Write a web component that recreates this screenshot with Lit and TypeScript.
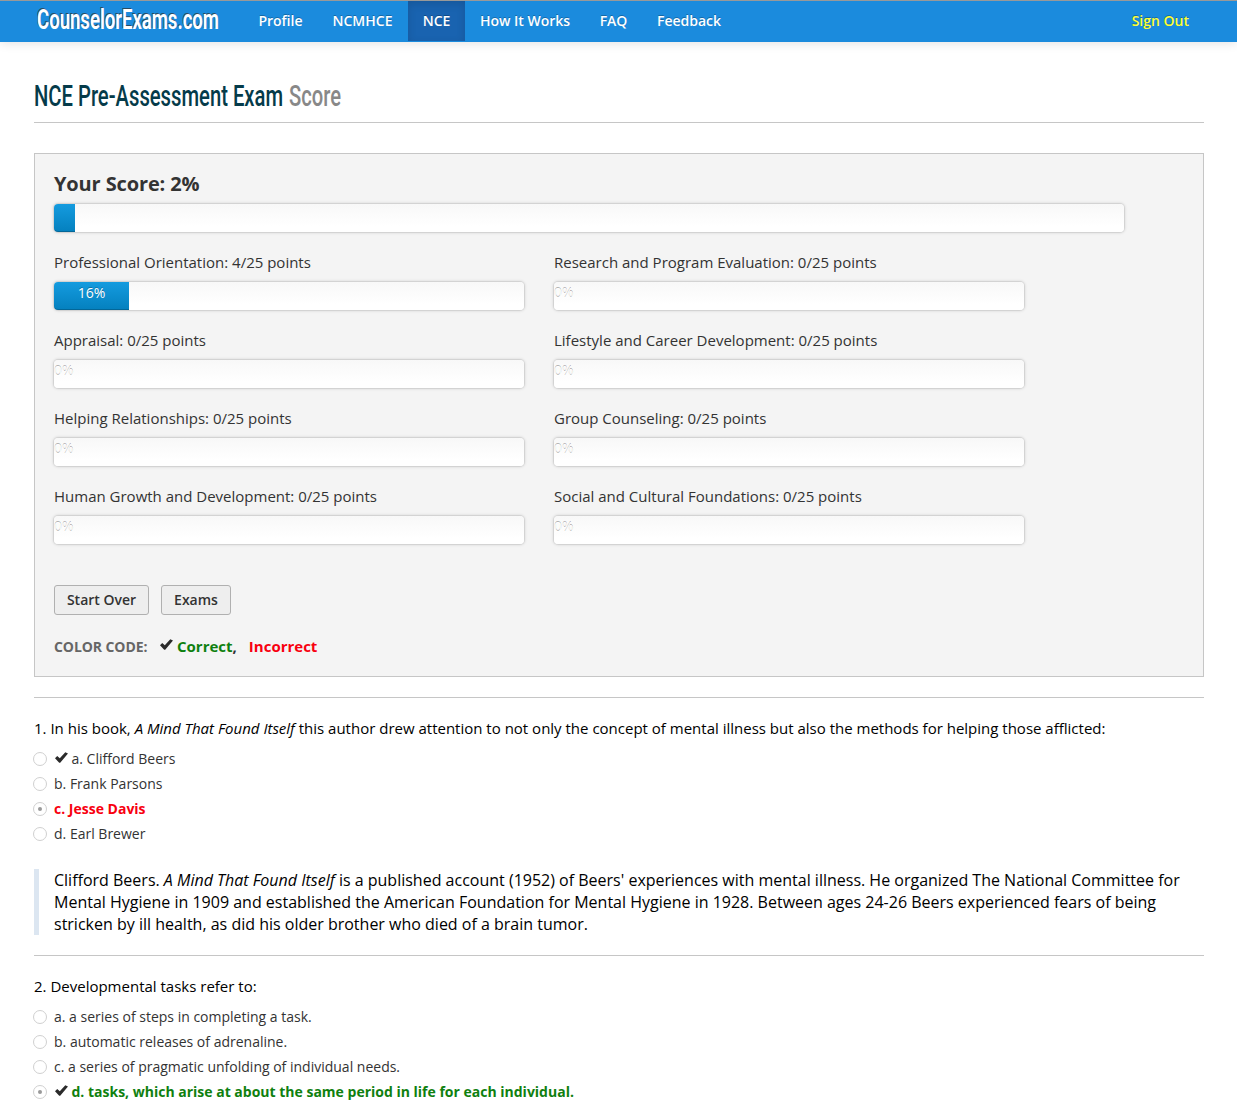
import { LitElement, html, css } from "lit";
import { customElement, property } from "lit/decorators.js";

const sans = css`"Open Sans", "Noto Sans", sans-serif`;

const check = () => html`<svg class="check" width="13" height="11" viewBox="0 0 13 11">
  <path d="M0 6.2 L2.2 4 L4.8 6.3 L10.3 0.3 L13 1.6 L5.2 10.8 L4.2 10.8 Z" fill="#2b2b2b" />
</svg>`;

// Condenses its text horizontally so that it fills the given width.
@customElement("fit-text")
class FitText extends LitElement {
  @property() text = "";
  @property({ type: Number }) width = 100;
  static styles = css`
    :host { display: block; flex: none; }
    .text { display: inline-block; white-space: nowrap; transform-origin: 0 50%; }
  `;
  updated() {
    const el = this.renderRoot.querySelector(".text") as HTMLElement;
    el.style.transform = "none";
    const scale = this.width / el.getBoundingClientRect().width;
    el.style.transform = `scaleX(${scale})`;
  }
  render() {
    return html`<div style="width:${this.width}px"><span class="text">${this.text}</span></div>`;
  }
}

@customElement("site-header")
class SiteHeader extends LitElement {
  static styles = css`
    :host { display: block; font-family: ${sans}; }
    .bar {
      height: 42px; box-sizing: border-box; border-top: 1px solid #999;
      background: #1b8bdd; box-shadow: 0 1px 10px rgba(0, 0, 0, 0.12);
      display: flex; padding: 0 48px 0 37px;
    }
    .logo {
      font: 600 27px/39px Roboto, sans-serif; color: #fff; text-shadow: -1px -1px 0 #2b4a60;
      width: 207px; box-sizing: border-box;
    }
    .nav { display: flex; flex: 1; }
    .item {
      height: 40px; line-height: 40px; font-size: 14px; font-weight: 600; color: #fff;
      text-align: center; text-shadow: 0 -1px 0 rgba(0, 0, 0, 0.25); white-space: nowrap;
    }
    .active { background: #1963b0; box-shadow: inset 0 3px 8px rgba(0, 0, 0, 0.125); }
    .out { color: #ffff33; }
  `;
  render() {
    const items: [string, number][] = [
      ["Profile", 73], ["NCMHCE", 91], ["NCE", 57], ["How It Works", 120], ["FAQ", 57], ["Feedback", 94],
    ];
    return html`<div class="bar">
      <div class="logo"><fit-text text="CounselorExams.com" width="182"></fit-text></div>
      <div class="nav">
        ${items.map(([t, w]) => html`<div class="item ${t === "NCE" ? "active" : ""}" style="width:${w}px">${t}</div>`)}
      </div>
      <div class="item out">Sign Out</div>
    </div>`;
  }
}

@customElement("score-bar")
class ScoreBar extends LitElement {
  @property({ type: Number }) value = 0;
  @property({ type: Boolean }) plain = false;
  static styles = css`
    :host { display: block; font-family: ${sans}; }
    .track {
      height: 28px; border-radius: 4px; background: linear-gradient(#f8f8f8, #fff 80%);
      box-shadow: 0 0 0 1px rgba(0, 0, 0, 0.05), 0 0 3px 1px rgba(0, 0, 0, 0.13);
    }
    .fill {
      height: 28px; box-sizing: border-box; border-radius: 4px 0 0 4px; line-height: 22px;
      background: linear-gradient(#149bdf, #0480be); box-shadow: inset 0 -1px 0 rgba(0, 0, 0, 0.2);
      color: #fff; font-size: 14px; text-align: center; text-shadow: 0 -1px 0 rgba(0, 0, 0, 0.25);
    }
    .zero { color: #fff; font-size: 14px; line-height: 22px; text-shadow: 0 -1px 0 rgba(0, 0, 0, 0.3); }
  `;
  render() {
    return html`<div class="track">${this.value > 0
      ? html`<div class="fill" style="width:${this.value}%">${this.plain ? "" : `${this.value}%`}</div>`
      : html`<div class="zero">0%</div>`}</div>`;
  }
}

@customElement("answer-row")
class AnswerRow extends LitElement {
  @property() text = "";
  @property() tone = "";
  @property({ type: Boolean }) picked = false;
  @property({ type: Boolean }) correct = false;
  static styles = css`
    :host { display: block; font-family: ${sans}; }
    .row { display: flex; align-items: center; height: 25px; font-size: 14px; color: #333; margin-left: -1px; white-space: nowrap; }
    .radio {
      width: 14px; height: 14px; box-sizing: border-box; border: 1px solid #d0d0d0; border-radius: 50%;
      margin-right: 7px; display: flex; align-items: center; justify-content: center; flex: none;
    }
    .dot { width: 4px; height: 4px; border-radius: 50%; background: #999; }
    .check { margin: 0 3.5px 3px 1px; }
    .red { color: #f8000f; font-weight: 700; }
    .green { color: #0f800f; font-weight: 700; }
  `;
  render() {
    return html`<div class="row">
      <span class="radio">${this.picked ? html`<span class="dot"></span>` : ""}</span>
      ${this.correct ? check() : ""}<span class="${this.tone}">${this.text}</span>
    </div>`;
  }
}

@customElement("app-root")
class AppRoot extends LitElement {
  static styles = css`
    :host { display: block; height: 1115px; overflow: hidden; background: #fff; font-family: ${sans}; color: #333; }
    .page { padding: 0 33px 0 34px; }
    .title {
      height: 80px; box-sizing: content-box; border-bottom: 1px solid #c6c6c6; display: flex; gap: 6px;
      font: 500 30px/107px Roboto, sans-serif; color: #053b4a;
    }
    .sub { color: #888; }
    .panel {
      margin-top: 30px; height: 524px; box-sizing: border-box; border: 1px solid #c6c6c6;
      background: #f4f4f4; padding: 15px 19px 0;
    }
    .score { font-size: 20px; font-weight: 700; line-height: 29px; height: 35px; letter-spacing: -0.13px; }
    .total { width: 1070px; margin-bottom: 15px; }
    .grid { display: grid; grid-template-columns: 470px 470px; column-gap: 30px; }
    .cell { height: 78px; }
    .label { height: 35px; line-height: 31px; font-size: 15px; white-space: nowrap; }
    .buttons { display: flex; gap: 12px; margin-top: 26px; }
    .btn {
      height: 30px; box-sizing: border-box; border: 1px solid #b0b0b0; border-radius: 3px; background: #eee;
      font-size: 14px; font-weight: 600; line-height: 28px; text-align: center;
    }
    .b1 { width: 95px; }
    .b2 { width: 70px; }
    .code { display: flex; align-items: center; margin-top: 20px; height: 22px; font-size: 15px; font-weight: 700; white-space: nowrap; }
    .codelabel { color: #666; width: 106px; font-size: 14px; letter-spacing: -0.08px; }
    .check { margin: 0 4px 3px 0; }
    .ok { color: #0f800f; }
    .bad { color: #f8000f; margin-left: 12px; }
    .rule { height: 1px; background: #c6c6c6; }
    .question { font-size: 15px; color: #000; line-height: 30px; height: 33px; padding-top: 15px; white-space: nowrap; }
    .note {
      border-left: 5px solid #dce6f1; margin: 23px 0 20px; padding-left: 15px; height: 66px;
      font-size: 16px; line-height: 22px; color: #000; white-space: nowrap;
    }
    .line { height: 22px; }
    .first { margin-top: 20px; }
  `;
  render() {
    const cells: [string, number][] = [
      ["Professional Orientation: 4/25 points", 16], ["Research and Program Evaluation: 0/25 points", 0],
      ["Appraisal: 0/25 points", 0], ["Lifestyle and Career Development: 0/25 points", 0],
      ["Helping Relationships: 0/25 points", 0], ["Group Counseling: 0/25 points", 0],
      ["Human Growth and Development: 0/25 points", 0], ["Social and Cultural Foundations: 0/25 points", 0],
    ];
    return html`<site-header></site-header>
    <div class="page">
      <div class="title">
        <fit-text text="NCE Pre-Assessment Exam" width="249"></fit-text>
        <fit-text class="sub" text="Score" width="52"></fit-text>
      </div>
      <div class="panel">
        <div class="score">Your Score: 2%</div>
        <score-bar class="total" value="2" plain></score-bar>
        <div class="grid">${cells.map(([t, v]) => html`<div class="cell"><div class="label">${t}</div><score-bar .value=${v}></score-bar></div>`)}</div>
        <div class="buttons"><div class="btn b1">Start Over</div><div class="btn b2">Exams</div></div>
        <div class="code"><span class="codelabel">COLOR CODE:</span>${check()}<span class="ok">Correct</span>,<span class="bad">Incorrect</span></div>
      </div>
      <div class="rule first"></div>
      <div class="question">1. In his book, <i>A Mind That Found Itself</i> this author drew attention to not only the concept of mental illness but also the methods for helping those afflicted:</div>
      <answer-row text="a. Clifford Beers" correct></answer-row>
      <answer-row text="b. Frank Parsons"></answer-row>
      <answer-row text="c. Jesse Davis" tone="red" picked></answer-row>
      <answer-row text="d. Earl Brewer"></answer-row>
      <div class="note">
        <div class="line">Clifford Beers. <i>A Mind That Found Itself</i> is a published account (1952) of Beers' experiences with mental illness. He organized The National Committee for</div>
        <div class="line">Mental Hygiene in 1909 and established the American Foundation for Mental Hygiene in 1928. Between ages 24-26 Beers experienced fears of being</div>
        <div class="line">stricken by ill health, as did his older brother who died of a brain tumor.</div>
      </div>
      <div class="rule"></div>
      <div class="question">2. Developmental tasks refer to:</div>
      <answer-row text="a. a series of steps in completing a task."></answer-row>
      <answer-row text="b. automatic releases of adrenaline."></answer-row>
      <answer-row text="c. a series of pragmatic unfolding of individual needs."></answer-row>
      <answer-row text="d. tasks, which arise at about the same period in life for each individual." tone="green" correct picked></answer-row>
    </div>`;
  }
}
